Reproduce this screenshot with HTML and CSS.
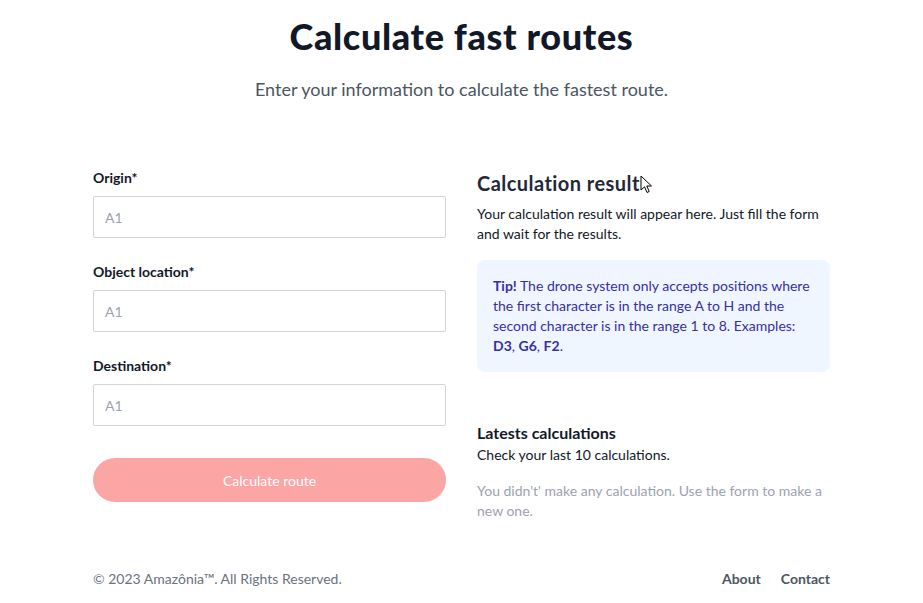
FILE: index.html
```html
<!DOCTYPE html>
<html lang="en">
<head>
<meta charset="utf-8">
<title>Calculate fast routes</title>
<link rel="stylesheet" href="styles.css">
</head>
<body>
<main class="page">
  <header class="hero">
    <h1 class="title">Calculate fast routes</h1>
    <p class="subtitle">Enter your information to calculate the fastest route.</p>
  </header>
  <section class="grid">
    <form class="form">
      <div class="field">
        <label class="label">Origin*</label>
        <input class="input" type="text" placeholder="A1">
      </div>
      <div class="field">
        <label class="label">Object location*</label>
        <input class="input" type="text" placeholder="A1">
      </div>
      <div class="field">
        <label class="label">Destination*</label>
        <input class="input" type="text" placeholder="A1">
      </div>
      <button class="button" type="button">Calculate route</button>
    </form>
    <div class="result">
      <h2 class="result-title"><span class="result-title-text">Calculation result<svg class="cursor" width="13" height="20" viewBox="0 0 13 20"><path d="M1 1 L1 15 L4.5 11.8 L7 17.5 L9.2 16.5 L6.8 11 L11.5 11 Z" fill="#fff" stroke="#000" stroke-width="1"/></svg></span></h2>
      <p class="result-text">Your calculation result will appear here. Just fill the form and wait for the results.</p>
      <div class="tip"><strong>Tip!</strong> The drone system only accepts positions where the first character is in the range A to H and the second character is in the range 1 to 8. Examples: <strong>D3</strong>, <strong>G6</strong>, <strong>F2</strong>.</div>
      <h3 class="latest-title">Latests calculations</h3>
      <p class="latest-text">Check your last 10 calculations.</p>
      <p class="empty">You didn't' make any calculation. Use the form to make a new one.</p>
    </div>
  </section>
  <footer class="footer">
    <span class="copy">© 2023 Amazônia™. All Rights Reserved.</span>
    <nav class="links">
      <a class="link" href="#">About</a>
      <a class="link" href="#">Contact</a>
    </nav>
  </footer>
</main>
</body>
</html>
```
FILE: styles.css
```css
* { box-sizing: border-box; }
html, body { margin: 0; padding: 0; background: #fff; }
body {
  font-family: Lato, "Liberation Sans", sans-serif;
  color: #111827;
}
.page {
  max-width: 769px;
  margin: 0 auto;
  padding: 16px 16px 0;
}
.hero { text-align: center; }
.title {
  margin: 0;
  font-size: 36px;
  line-height: 40px;
  font-weight: 900;
  letter-spacing: 0.65px;
  color: #111827;
}
.subtitle {
  margin: 19px 0 0;
  font-size: 18px;
  line-height: 28px;
  color: #4b5563;
}
.grid {
  margin-top: 65px;
  display: grid;
  grid-template-columns: 1fr 1fr;
  column-gap: 31px;
}
.form { display: flex; flex-direction: column; }
.field { display: flex; flex-direction: column; margin-bottom: 24px; }
.label {
  font-size: 14px;
  line-height: 20px;
  font-weight: 700;
  color: #111827;
  margin-bottom: 8px;
}
.input {
  height: 42px;
  border: 1px solid #d1d5db;
  border-radius: 2px;
  padding: 0 11px;
  font-family: inherit;
  font-size: 14px;
  color: #111827;
  outline: none;
}
.input::placeholder { color: #9ca3af; }
.button {
  margin-top: 8px;
  height: 44px;
  border: none;
  border-radius: 9999px;
  background: #fca5a5;
  color: #fff;
  font-family: inherit;
  font-size: 14px;
}
.result { display: flex; flex-direction: column; }
.result-title {
  margin: 1px 0 0;
  font-size: 20px;
  line-height: 28px;
  font-weight: 700;
  letter-spacing: 0.45px;
  color: #1f2937;
}
.result-title-text { position: relative; }
.cursor { position: absolute; left: 100%; top: 4px; }
.result-text {
  margin: 7px 0 0;
  font-size: 14px;
  line-height: 20px;
  color: #111827;
}
.tip {
  margin-top: 16px;
  background: #eff6ff;
  border-radius: 8px;
  padding: 16px;
  font-size: 14px;
  line-height: 20px;
  color: #3730a3;
}
.tip strong { font-weight: 700; }
.latest-title {
  margin: 49px 0 0;
  font-size: 16px;
  line-height: 24px;
  font-weight: 700;
  color: #111827;
}
.latest-text {
  margin: 0;
  font-size: 14px;
  line-height: 20px;
  color: #111827;
}
.empty {
  margin: 16px 0 0;
  font-size: 14px;
  line-height: 20px;
  color: #9ca3af;
}
.footer {
  margin-top: 48px;
  display: flex;
  justify-content: space-between;
  align-items: center;
  font-size: 14px;
  line-height: 20px;
}
.copy { color: #6b7280; }
.links { display: flex; gap: 20px; }
.link { color: #4b5563; text-decoration: none; font-weight: 700; }
```
